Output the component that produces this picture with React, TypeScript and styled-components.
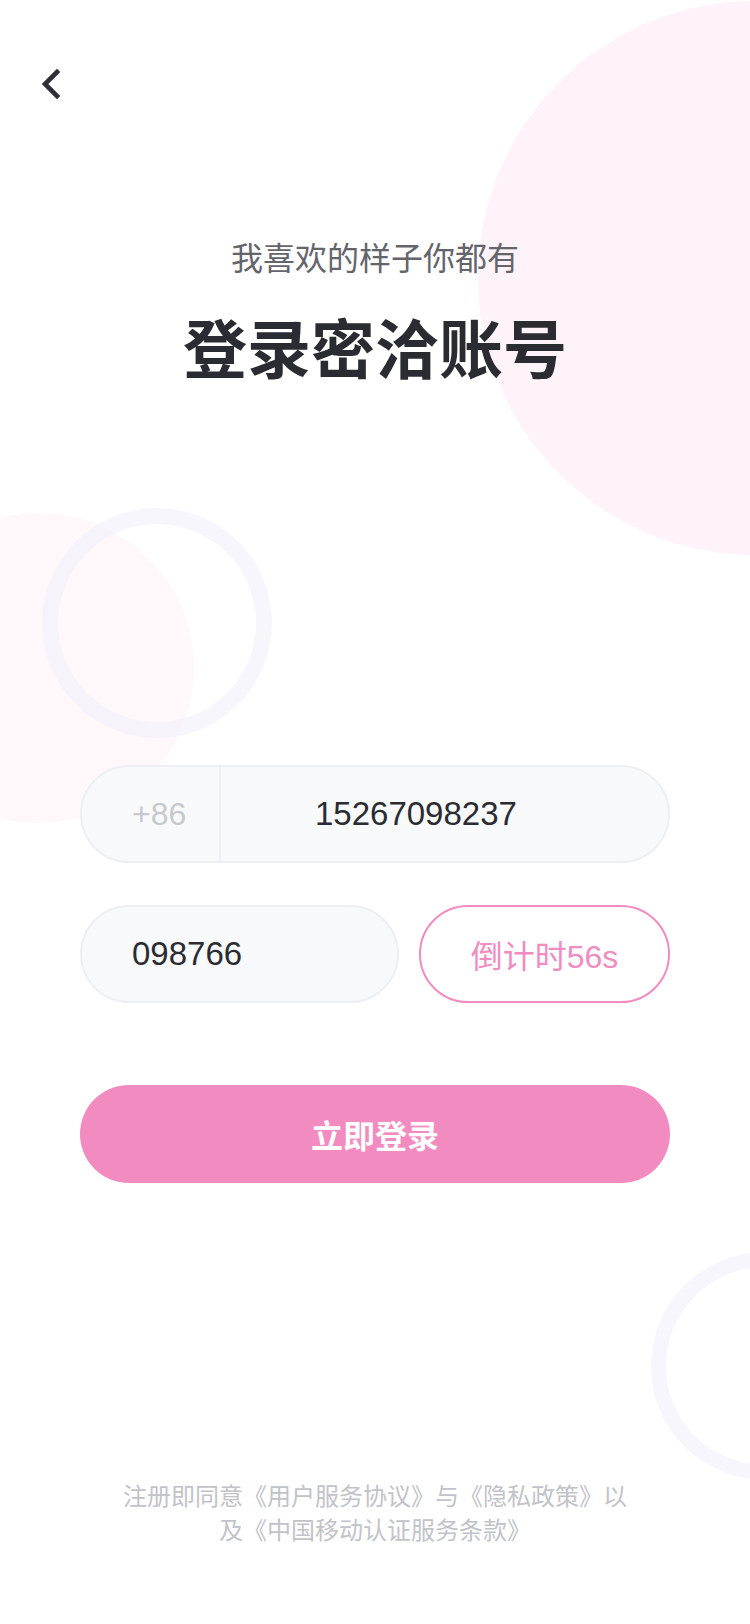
import React from "react";
import styled, { createGlobalStyle } from "styled-components";

const GlobalStyle = createGlobalStyle`
  html, body {
    margin: 0;
    padding: 0;
    background: #ffffff;
  }
  * { box-sizing: border-box; }
`;

const FONT = `"Liberation Sans", "Noto Sans CJK SC", sans-serif`;

const Page = styled.div`
  position: relative;
  width: 750px;
  min-height: 1624px;
  overflow: hidden;
  background: #ffffff;
  font-family: ${FONT};
  display: flex;
  flex-direction: column;
`;

const Blob = styled.div<{ $size: number; $left: number; $top: number; $color: string }>`
  position: absolute;
  left: ${(p) => p.$left}px;
  top: ${(p) => p.$top}px;
  width: ${(p) => p.$size}px;
  height: ${(p) => p.$size}px;
  border-radius: 50%;
  background: ${(p) => p.$color};
  z-index: 0;
`;

const Ring = styled.div<{ $size: number; $left: number; $top: number; $stroke: number }>`
  position: absolute;
  left: ${(p) => p.$left}px;
  top: ${(p) => p.$top}px;
  width: ${(p) => p.$size}px;
  height: ${(p) => p.$size}px;
  border-radius: 50%;
  border: ${(p) => p.$stroke}px solid rgba(240, 238, 252, 0.55);
  z-index: 0;
`;

const Content = styled.div`
  position: relative;
  z-index: 1;
  display: flex;
  flex-direction: column;
`;

const TopBar = styled.div`
  height: 108px;
  padding: 60px 0 0 28px;
`;

const BackButton = styled.button`
  width: 48px;
  height: 48px;
  border: none;
  background: transparent;
  padding: 0;
  display: flex;
  align-items: center;
  justify-content: center;
  cursor: pointer;
`;

const Hero = styled.div`
  margin-top: 126px;
  display: flex;
  flex-direction: column;
  align-items: center;
`;

const Subtitle = styled.div`
  font-family: "Noto Sans CJK SC", sans-serif;
  font-size: 32px;
  line-height: 44px;
  color: #64656b;
`;

const Title = styled.h1`
  margin: 23px 0 0;
  font-family: "Noto Sans CJK SC", sans-serif;
  font-size: 64px;
  line-height: 88px;
  font-weight: 700;
  color: #2b2c31;
`;

const Form = styled.div`
  margin: 376px 0 0 80px;
  width: 590px;
  display: flex;
  flex-direction: column;
`;

const Field = styled.div`
  height: 98px;
  border: 2px solid #eeeff2;
  background: #f8f9fb;
  border-radius: 49px;
  display: flex;
  align-items: center;
  overflow: hidden;
`;

const Prefix = styled.div`
  width: 139px;
  height: 100%;
  border-right: 2px solid #eeeff2;
  display: flex;
  align-items: center;
  padding-left: 50px;
  font-size: 32px;
  color: #c8c9ce;
`;

const Value = styled.div<{ $pad: number }>`
  flex: 1;
  padding-left: ${(p) => p.$pad}px;
  font-size: 33px;
  color: #2b2c31;
`;

const CodeRow = styled.div`
  margin-top: 42px;
  display: flex;
  gap: 20px;
`;

const CodeField = styled(Field)`
  flex: 1;
`;

const CountdownButton = styled.button`
  width: 251px;
  height: 98px;
  border: 2px solid #f08cbf;
  border-radius: 49px;
  background: #ffffff;
  color: #f08cbf;
  font-family: ${FONT};
  font-size: 32px;
  padding: 0;
  display: flex;
  align-items: center;
  justify-content: center;
`;

const LoginButton = styled.button`
  margin-top: 82px;
  height: 98px;
  border: none;
  border-radius: 49px;
  background: #f28bbf;
  color: #ffffff;
  font-family: "Noto Sans CJK SC", sans-serif;
  font-size: 32px;
  font-weight: 700;
  display: flex;
  align-items: center;
  justify-content: center;
  padding: 0;
`;

const Footer = styled.p`
  margin: 295px auto 0;
  width: 520px;
  text-align: center;
  font-family: "Noto Sans CJK SC", sans-serif;
  font-size: 24px;
  line-height: 34px;
  color: #c2c3c9;
`;

const Chevron = () => (
  <svg width="24" height="34" viewBox="0 0 24 34" fill="none">
    <polyline
      points="17,5 5,17 17,29"
      stroke="#2f3035"
      strokeWidth="4.6"
      strokeLinecap="square"
      strokeLinejoin="miter"
      fill="none"
    />
  </svg>
);

export default function App() {
  return (
    <>
      <GlobalStyle />
      <Page>
        <Blob $size={554} $left={478} $top={1} $color="#fdf3f8" />
        <Blob $size={310} $left={-116} $top={513} $color="#fff8fa" />
        <Ring $size={230} $left={42} $top={508} $stroke={16} />
        <Ring $size={228} $left={651} $top={1252} $stroke={15} />
        <Content>
          <TopBar>
            <BackButton aria-label="返回">
              <Chevron />
            </BackButton>
          </TopBar>
          <Hero>
            <Subtitle>我喜欢的样子你都有</Subtitle>
            <Title>登录密洽账号</Title>
          </Hero>
          <Form>
            <Field>
              <Prefix>+86</Prefix>
              <Value $pad={94}>15267098237</Value>
            </Field>
            <CodeRow>
              <CodeField>
                <Value $pad={50}>098766</Value>
              </CodeField>
              <CountdownButton>倒计时56s</CountdownButton>
            </CodeRow>
            <LoginButton>立即登录</LoginButton>
          </Form>
          <Footer>注册即同意《用户服务协议》与《隐私政策》以及《中国移动认证服务条款》</Footer>
        </Content>
      </Page>
    </>
  );
}
